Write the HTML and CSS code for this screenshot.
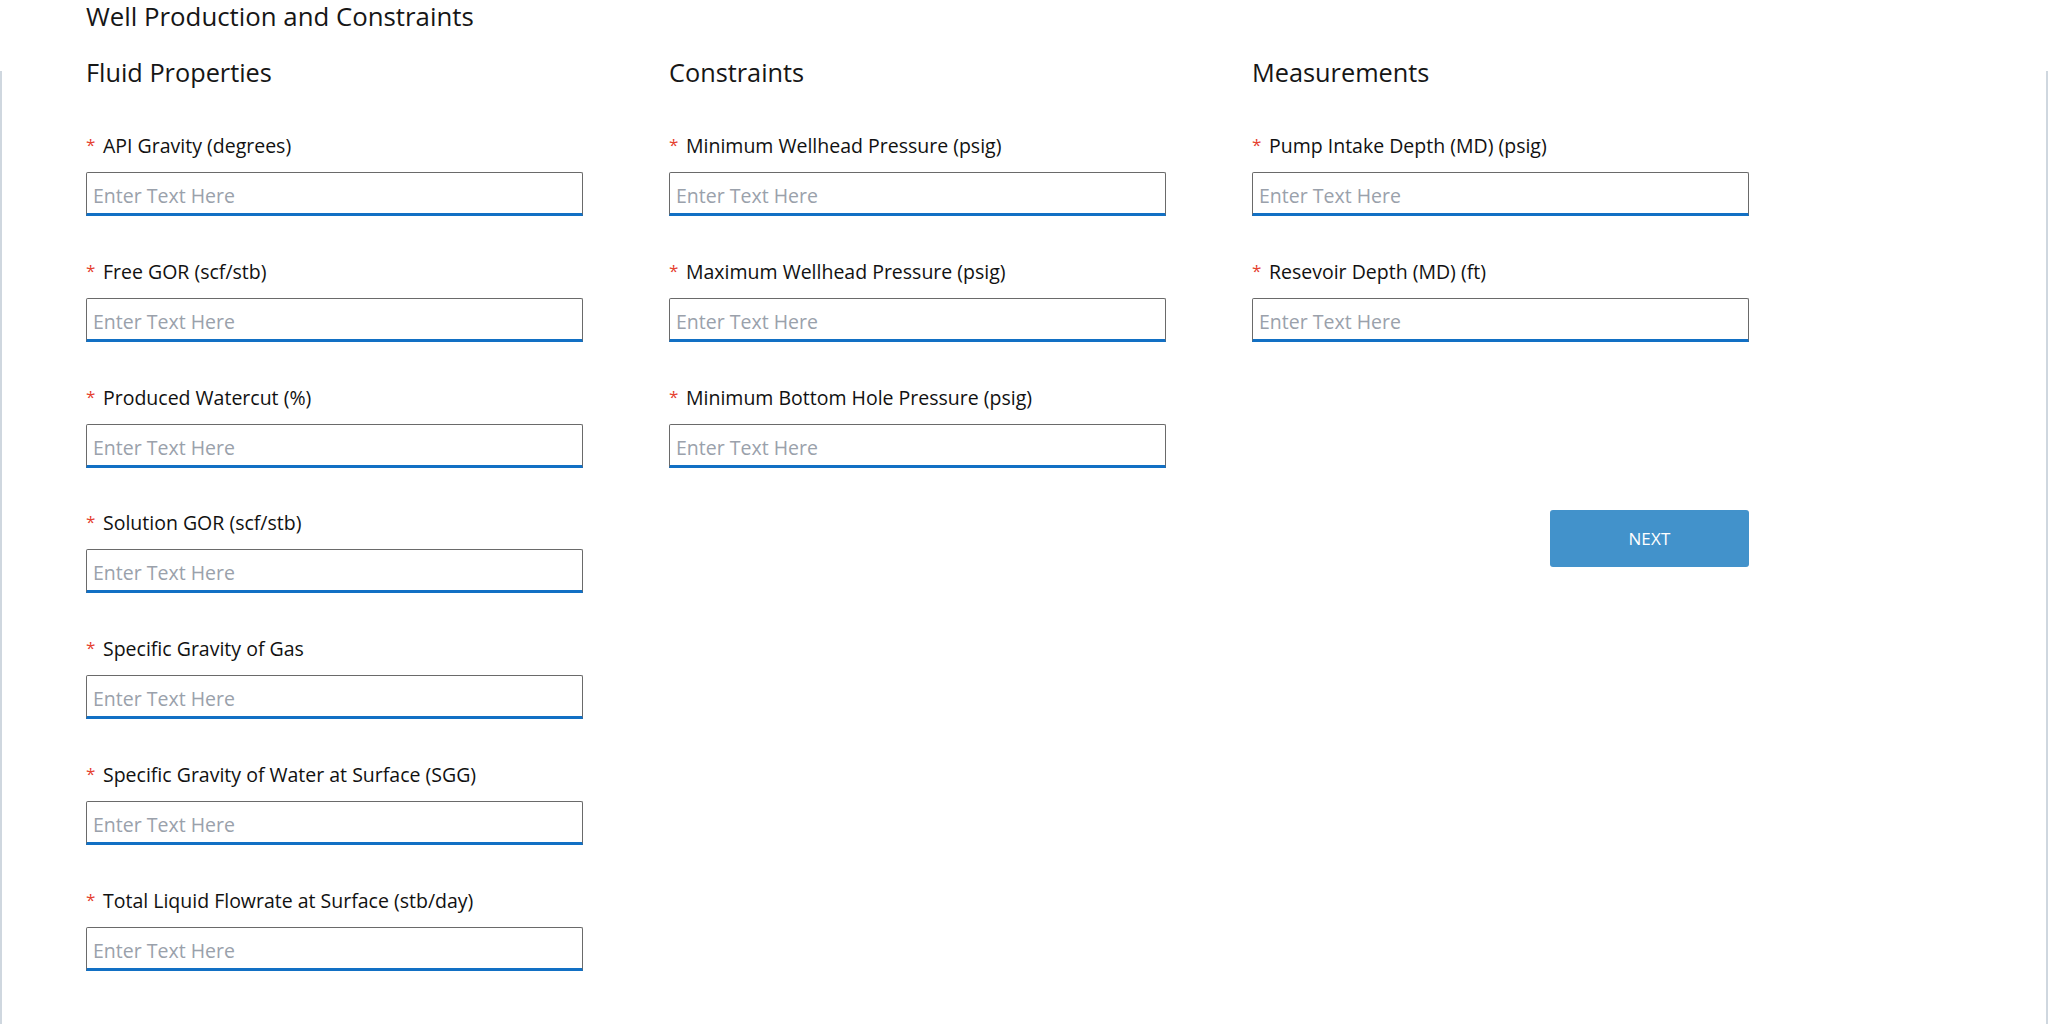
FILE: index.html
```html
<!DOCTYPE html>
<html lang="en">
<head>
<meta charset="utf-8">
<title>Well Production and Constraints</title>
<link rel="stylesheet" href="styles.css">
</head>
<body>
<h1 class="page-title">Well Production and Constraints</h1>
<main class="panel">
  <div class="columns">
    <section class="col">
      <h2 class="col-title">Fluid Properties</h2>
      <div class="field"><label class="label"><span class="req">*</span>API Gravity (degrees)</label><input class="input" type="text" placeholder="Enter Text Here"></div>
      <div class="field"><label class="label"><span class="req">*</span>Free GOR (scf/stb)</label><input class="input" type="text" placeholder="Enter Text Here"></div>
      <div class="field"><label class="label"><span class="req">*</span>Produced Watercut (%)</label><input class="input" type="text" placeholder="Enter Text Here"></div>
      <div class="field"><label class="label"><span class="req">*</span>Solution GOR (scf/stb)</label><input class="input" type="text" placeholder="Enter Text Here"></div>
      <div class="field"><label class="label"><span class="req">*</span>Specific Gravity of Gas</label><input class="input" type="text" placeholder="Enter Text Here"></div>
      <div class="field"><label class="label"><span class="req">*</span>Specific Gravity of Water at Surface (SGG)</label><input class="input" type="text" placeholder="Enter Text Here"></div>
      <div class="field"><label class="label"><span class="req">*</span>Total Liquid Flowrate at Surface (stb/day)</label><input class="input" type="text" placeholder="Enter Text Here"></div>
    </section>
    <section class="col">
      <h2 class="col-title">Constraints</h2>
      <div class="field"><label class="label"><span class="req">*</span>Minimum Wellhead Pressure (psig)</label><input class="input" type="text" placeholder="Enter Text Here"></div>
      <div class="field"><label class="label"><span class="req">*</span>Maximum Wellhead Pressure (psig)</label><input class="input" type="text" placeholder="Enter Text Here"></div>
      <div class="field"><label class="label"><span class="req">*</span>Minimum Bottom Hole Pressure (psig)</label><input class="input" type="text" placeholder="Enter Text Here"></div>
    </section>
    <section class="col">
      <h2 class="col-title">Measurements</h2>
      <div class="field"><label class="label"><span class="req">*</span>Pump Intake Depth (MD) (psig)</label><input class="input" type="text" placeholder="Enter Text Here"></div>
      <div class="field"><label class="label"><span class="req">*</span>Resevoir Depth (MD) (ft)</label><input class="input" type="text" placeholder="Enter Text Here"></div>
      <button class="next-btn" type="button">NEXT</button>
    </section>
  </div>
</main>
</body>
</html>
```
FILE: styles.css
```css
html, body {
  margin: 0;
  padding: 0;
  height: 100%;
  background: #ffffff;
}

body {
  display: flex;
  flex-direction: column;
  font-family: "Open Sans", "Noto Sans", sans-serif;
  color: #111111;
  overflow: hidden;
}

.page-title {
  margin: 0 0 40px 0;
  padding: 1px 0 0 86px;
  font-size: 25.8px;
  line-height: 30px;
  font-weight: 400;
  color: #161616;
}

.panel {
  flex: 1;
  border-left: 2px solid #cfd7df;
  border-right: 2px solid #cfd7df;
  padding-left: 84px;
}

.columns {
  display: grid;
  grid-template-columns: 497px 497px 497px;
  column-gap: 86px;
  margin-top: -14px;
}

.col {
  display: flex;
  flex-direction: column;
}

.col-title {
  margin: 0 0 47px 0;
  font-size: 25.3px;
  line-height: 30px;
  font-weight: 400;
  color: #161616;
}

.field {
  display: flex;
  flex-direction: column;
  margin-bottom: 43.8px;
}

.label {
  display: block;
  font-size: 19.5px;
  line-height: 24px;
  margin-bottom: 14px;
  color: #111111;
}

.req {
  display: inline-block;
  width: 17px;
  color: #e5412f;
  font-size: 17px;
  vertical-align: top;
  line-height: 22px;
}

.input {
  box-sizing: border-box;
  width: 497px;
  height: 44px;
  margin: 0;
  padding: 5px 6px 0 6px;
  border: 1px solid #6a6a6a;
  border-bottom: 3px solid #1270c4;
  border-radius: 2px 2px 0 0;
  font-family: "Open Sans", "Noto Sans", sans-serif;
  font-size: 19.5px;
  color: #111111;
  background: #ffffff;
  outline: none;
}

.input::placeholder {
  color: #9aa1ab;
  opacity: 1;
}

.next-btn {
  align-self: flex-end;
  width: 199px;
  height: 57px;
  margin-top: 124px;
  border: none;
  border-radius: 3px;
  background: #4292cb;
  color: #ffffff;
  font-family: "Open Sans", "Noto Sans", sans-serif;
  font-size: 17px;
  letter-spacing: 0.2px;
  cursor: pointer;
}
```
